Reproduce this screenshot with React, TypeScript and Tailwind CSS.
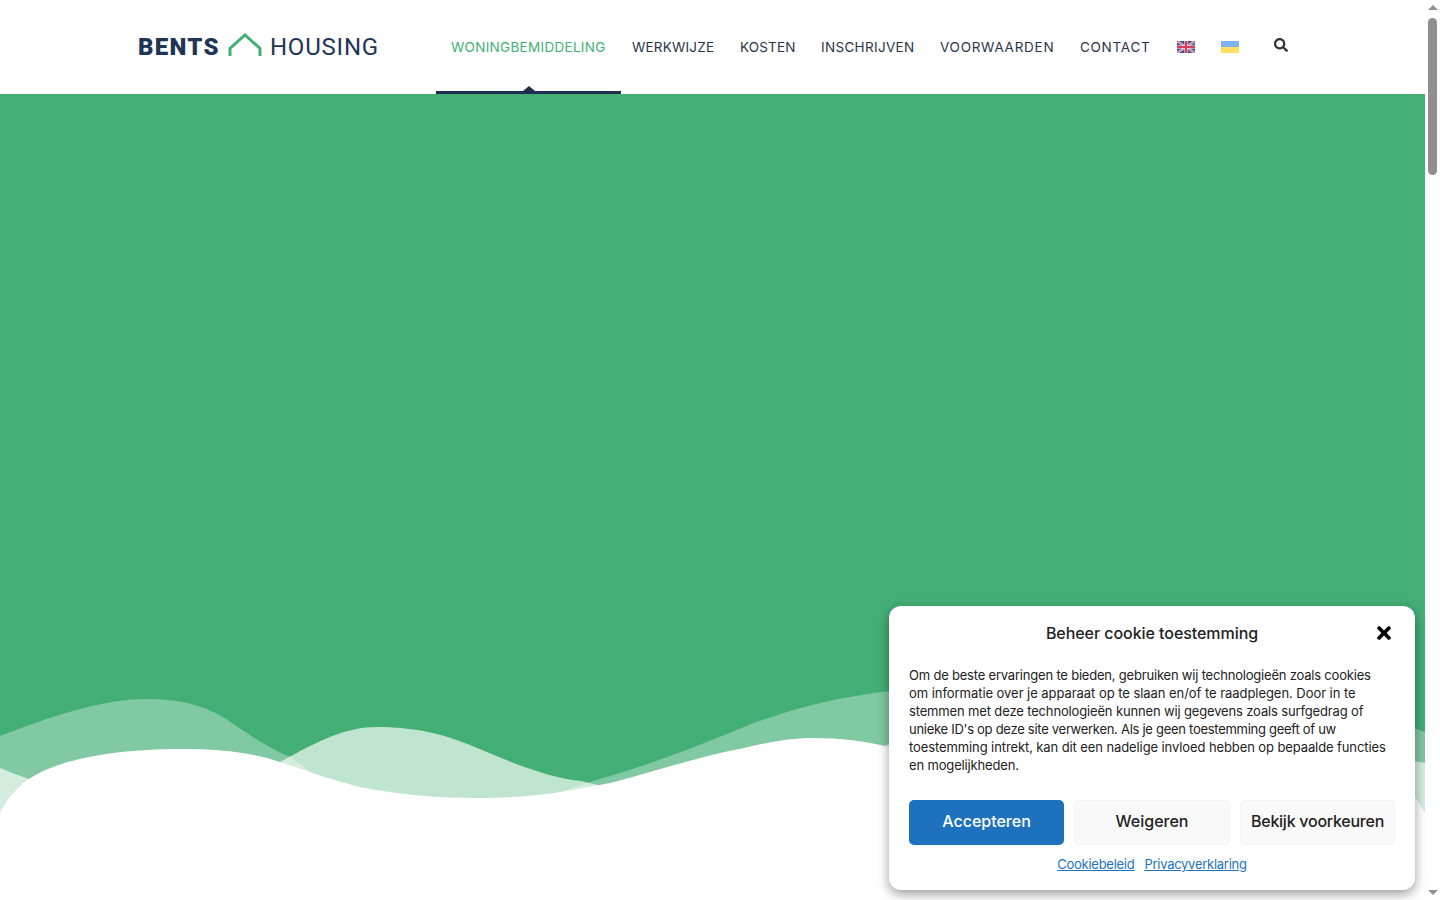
import { FaSearch, FaTimes } from 'react-icons/fa';

const navItems = [
  { label: 'WONINGBEMIDDELING', width: 'w-[155px]', tracking: 'tracking-[0.3px]', active: true },
  { label: 'WERKWIJZE', width: 'w-[82px]', tracking: 'tracking-[0.21px]', active: false },
  { label: 'KOSTEN', width: 'w-[55px]', tracking: 'tracking-[0.15px]', active: false },
  { label: 'INSCHRIJVEN', width: 'w-[93px]', tracking: 'tracking-[0.32px]', active: false },
  { label: 'VOORWAARDEN', width: 'w-[114px]', tracking: 'tracking-[0.73px]', active: false },
  { label: 'CONTACT', width: 'w-[70px]', tracking: 'tracking-[0.72px]', active: false },
];

const cookieLines = [
  { text: 'Om de beste ervaringen te bieden, gebruiken wij technologieën zoals cookies', tracking: 'tracking-[-0.2px]' },
  { text: 'om informatie over je apparaat op te slaan en/of te raadplegen. Door in te', tracking: 'tracking-[-0.05px]' },
  { text: 'stemmen met deze technologieën kunnen wij gegevens zoals surfgedrag of', tracking: 'tracking-[-0.15px]' },
  { text: "unieke ID's op deze site verwerken. Als je geen toestemming geeft of uw", tracking: 'tracking-[-0.28px]' },
  { text: 'toestemming intrekt, kan dit een nadelige invloed hebben op bepaalde functies', tracking: 'tracking-[-0.1px]' },
  { text: 'en mogelijkheden.', tracking: 'tracking-[-0.15px]' },
];

function HouseMark() {
  return (
    <svg width="34" height="24" viewBox="0 0 34 24" fill="none" className="mb-[5px] ml-[8px] mr-[8px] shrink-0">
      <path d="M2 23V15.5L17 2L32 15.5V23" stroke="#43af75" strokeWidth="3" />
    </svg>
  );
}

function FlagUk() {
  return (
    <svg width="18" height="12" viewBox="0 0 18 12" className="opacity-90">
      <rect width="18" height="12" fill="#2b3f86" />
      <path d="M0 0L18 12M18 0L0 12" stroke="#fff" strokeWidth="2" />
      <path d="M0 0L18 12M18 0L0 12" stroke="#d8234a" strokeWidth="1" />
      <path d="M9 0V12M0 6H18" stroke="#fff" strokeWidth="3.2" />
      <path d="M9 0V12M0 6H18" stroke="#d8234a" strokeWidth="2.2" />
    </svg>
  );
}

function FlagUa() {
  return (
    <div className="flex h-3 w-[18px] flex-col">
      <div className="flex-1 bg-[#7fb2f5]" />
      <div className="flex-1 bg-[#ffdf62]" />
    </div>
  );
}

function Header() {
  return (
    <header className="flex h-[94px] shrink-0 items-center bg-white pl-[138px] text-[#2b3448]">
      <div className="flex w-[313px] shrink-0 items-center">
        <span className="font-['Roboto',sans-serif] text-[24px] font-black leading-none tracking-[1.3px] text-[#1f3554]">BENTS</span>
        <HouseMark />
        <span className="font-['Roboto',sans-serif] text-[24px] font-normal leading-none tracking-[0.8px] text-[#1f3554]">HOUSING</span>
      </div>
      <nav className="flex items-center gap-[26px] font-['Inter',sans-serif] text-[13.5px]">
        {navItems.map((item) => (
          <div key={item.label} className={`relative whitespace-nowrap ${item.width}`}>
            <span className={`${item.tracking} ${item.active ? 'text-[#43af75]' : ''}`}>{item.label}</span>
            {item.active && (
              <div className="absolute -left-[15px] -right-[15px] top-[54px] h-[3px] bg-[#1f2f52]">
                <div className="absolute left-1/2 top-[-5px] h-0 w-0 -translate-x-1/2 border-x-[6px] border-b-[5px] border-x-transparent border-b-[#1f2f52]" />
              </div>
            )}
          </div>
        ))}
      </nav>
      <div className="ml-[27px] flex items-center gap-[26px]">
        <FlagUk />
        <FlagUa />
      </div>
      <FaSearch className="mb-[5px] ml-[35px] text-[14px] text-[#333]" />
    </header>
  );
}

function Waves() {
  return (
    <svg viewBox="0 660 1425 240" className="absolute bottom-0 left-0 h-[240px] w-[1425px]">
      <path
        d="M0 736C50 717 100 699 148 699C185 699 212 708 235 725C255 739 272 749 290 757C310 770 330 790 345 800L480 805L545 797C560 792 578 786 593 781C650 765 700 745 744 727C800 705 850 695 900 690C1050 660 1250 670 1425 732V900H0Z"
        fill="#fff"
        fillOpacity="0.33"
      />
      <path
        d="M0 768C10 772 20 776 29 779L200 800L280 762C320 740 345 727 378 727C420 727 450 736 482 750C515 764 550 778 581 781C600 785 620 792 640 795L850 790L878 748C950 720 1150 710 1425 763V900H0Z"
        fill="#fff"
        fillOpacity="0.66"
      />
      <path
        d="M0 813C8 797 18 787 29 779C60 758 120 749 180 749C220 749 250 752 280 762C310 772 335 781 360 787C400 795 440 798 480 798C530 798 565 792 610 783C650 773 700 756 744 748C770 742 790 738 814 738C840 738 865 741 889 747C1050 790 1300 720 1415 797L1425 813V900H0Z"
        fill="#fff"
      />
    </svg>
  );
}

function CookieBanner() {
  return (
    <div className="absolute bottom-[10px] right-[25px] w-[526px] rounded-xl bg-white px-5 pb-[17px] pt-[19px] font-['Inter',sans-serif] text-[#222] shadow-[0_4px_12px_rgba(0,0,0,0.4)]">
      <div className="relative flex h-[16px] items-center justify-center">
        <span className="text-[16px] font-medium tracking-[-0.06px]">Beheer cookie toestemming</span>
        <FaTimes className="absolute right-[1px] top-[-2px] text-[20px] text-black" />
      </div>
      <div className="mt-[25px] text-[13px] leading-[18px]">
        {cookieLines.map((line) => (
          <div key={line.text} className={`whitespace-nowrap ${line.tracking}`}>{line.text}</div>
        ))}
      </div>
      <div className="mt-[26px] flex gap-[10px] text-[16px] font-medium">
        <button className="h-[45px] w-[155px] rounded-[5px] bg-[#1e71bd] pb-[4px] text-white">Accepteren</button>
        <button className="h-[45px] w-[156px] rounded-[5px] border border-[#f2f2f2] bg-[#f9f9f9] pb-[4px]">Weigeren</button>
        <button className="h-[45px] w-[155px] whitespace-nowrap rounded-[5px] border border-[#f2f2f2] bg-[#f9f9f9] pb-[4px] tracking-[-0.25px]">Bekijk voorkeuren</button>
      </div>
      <div className="mt-[10px] flex justify-center gap-[10px] text-[13px] leading-[18px] tracking-[-0.27px] text-[#1e73be] underline">
        <a href="#cookiebeleid">Cookiebeleid</a>
        <a href="#privacy">Privacyverklaring</a>
      </div>
    </div>
  );
}

function Scrollbar() {
  return (
    <div className="flex w-[15px] shrink-0 flex-col items-center justify-between bg-white py-[5px]">
      <div className="h-0 w-0 border-x-[5px] border-b-[5px] border-x-transparent border-b-[#8f8f8f]" />
      <div className="mb-auto mt-[8px] h-[157px] w-[9px] rounded-full bg-[#8f8f8f]" />
      <div className="h-0 w-0 border-x-[5px] border-t-[5px] border-x-transparent border-t-[#8f8f8f]" />
    </div>
  );
}

export default function App() {
  return (
    <div className="relative flex h-screen overflow-hidden bg-white">
      <div className="flex min-w-0 flex-1 flex-col">
        <Header />
        <main className="relative flex-1 bg-[#43af75]">
          <Waves />
        </main>
      </div>
      <Scrollbar />
      <CookieBanner />
    </div>
  );
}
